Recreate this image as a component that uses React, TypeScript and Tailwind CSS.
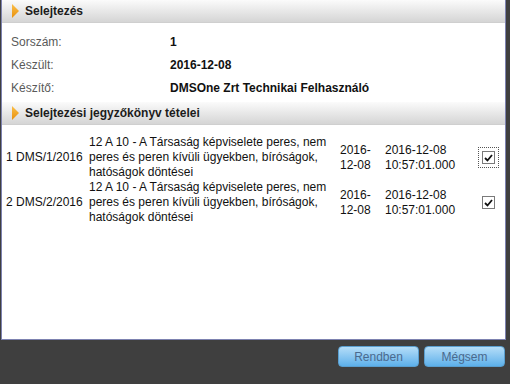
import React from "react";

const font = { fontFamily: '"Liberation Sans", Arial, sans-serif' };

function Header({ title }: { title: string }) {
  return (
    <div className="h-[23px] flex items-center bg-gradient-to-b from-[#fbfbfb] to-[#d5d5d5] border-b border-[#cfcfcf]">
      <svg width="7" height="14" viewBox="0 0 7 14" className="ml-[10px] mr-[6px]">
        <defs>
          <linearGradient id={"g" + title.length} x1="0" y1="0" x2="0" y2="1">
            <stop offset="0" stopColor="#fbc04a" />
            <stop offset="1" stopColor="#e8900c" />
          </linearGradient>
        </defs>
        <polygon points="0,0 7,7 0,14" fill={"url(#g" + title.length + ")"} />
      </svg>
      <span className="text-[12px] font-bold text-[#1c1c1c]">{title}</span>
    </div>
  );
}

function Check({ focused }: { focused?: boolean }) {
  return (
    <div className={"w-[21px] h-[21px] flex items-center justify-center " + (focused ? "border border-dotted border-[#555]" : "")}>
      <div className="w-[13px] h-[13px] border border-[#7a7a7a] bg-white flex items-center justify-center">
        <svg width="9" height="8" viewBox="0 0 9 8">
          <path d="M1 4 L3.5 6.5 L8 1" stroke="#111" strokeWidth="1.8" fill="none" />
        </svg>
      </div>
    </div>
  );
}

const rows = [
  { no: "1 DMS/1/2016", focused: true },
  { no: "2 DMS/2/2016", focused: false },
];

export default function App() {
  return (
    <div className="w-[510px] h-[384px] bg-[#3f3f3f] flex flex-col" style={font}>
      <div className="ml-[1px] w-[505px] h-[340px] bg-white border-l border-r border-b border-[#7d82b0] flex flex-col">
        <Header title="Selejtezés" />
        <div className="pt-[8px] pb-[3px] text-[12px]">
          {[
            ["Sorszám:", "1"],
            ["Készült:", "2016-12-08"],
            ["Készítő:", "DMSOne Zrt Technikai Felhasználó"],
          ].map(([l, v], i) => (
            <div key={i} className={"flex items-center " + (i === 1 ? "h-[23px]" : "h-[22.5px]")}>
              <span className="w-[168px] pl-[9px] text-[#5a5a5a]">{l}</span>
              <span className="font-bold text-[#111]">{v}</span>
            </div>
          ))}
        </div>
        <Header title="Selejtezési jegyzőkönyv tételei" />
        <div className="mt-[10px] text-[12px] leading-[15px] text-[#111]">
          {rows.map((r) => (
            <div key={r.no} className="grid grid-cols-[83px_251px_45px_92px_1fr] items-center pl-[4px]">
              <span>{r.no}</span>
              <span className="w-[246px]">12 A 10 - A Társaság képviselete peres, nem peres és peren kívüli ügyekben, bíróságok, hatóságok döntései</span>
              <span>2016-12-08</span>
              <span>
                2016-12-08
                <br />
                10:57:01.000
              </span>
              <div className="flex items-center pl-[1px]">
                <Check focused={r.focused} />
              </div>
            </div>
          ))}
        </div>
      </div>
      <div className="flex justify-end gap-[5px] pr-[5px] pt-[6px]">
        {["Rendben", "Mégsem"].map((t) => (
          <button
            key={t}
            className="w-[81px] h-[21px] rounded-[4px] border border-[#5a9fd0] bg-gradient-to-b from-[#b4ddf8] to-[#5cb0ea] text-[12px] text-[#4a6a8e] flex items-center justify-center"
            style={font}
          >
            {t}
          </button>
        ))}
      </div>
    </div>
  );
}
